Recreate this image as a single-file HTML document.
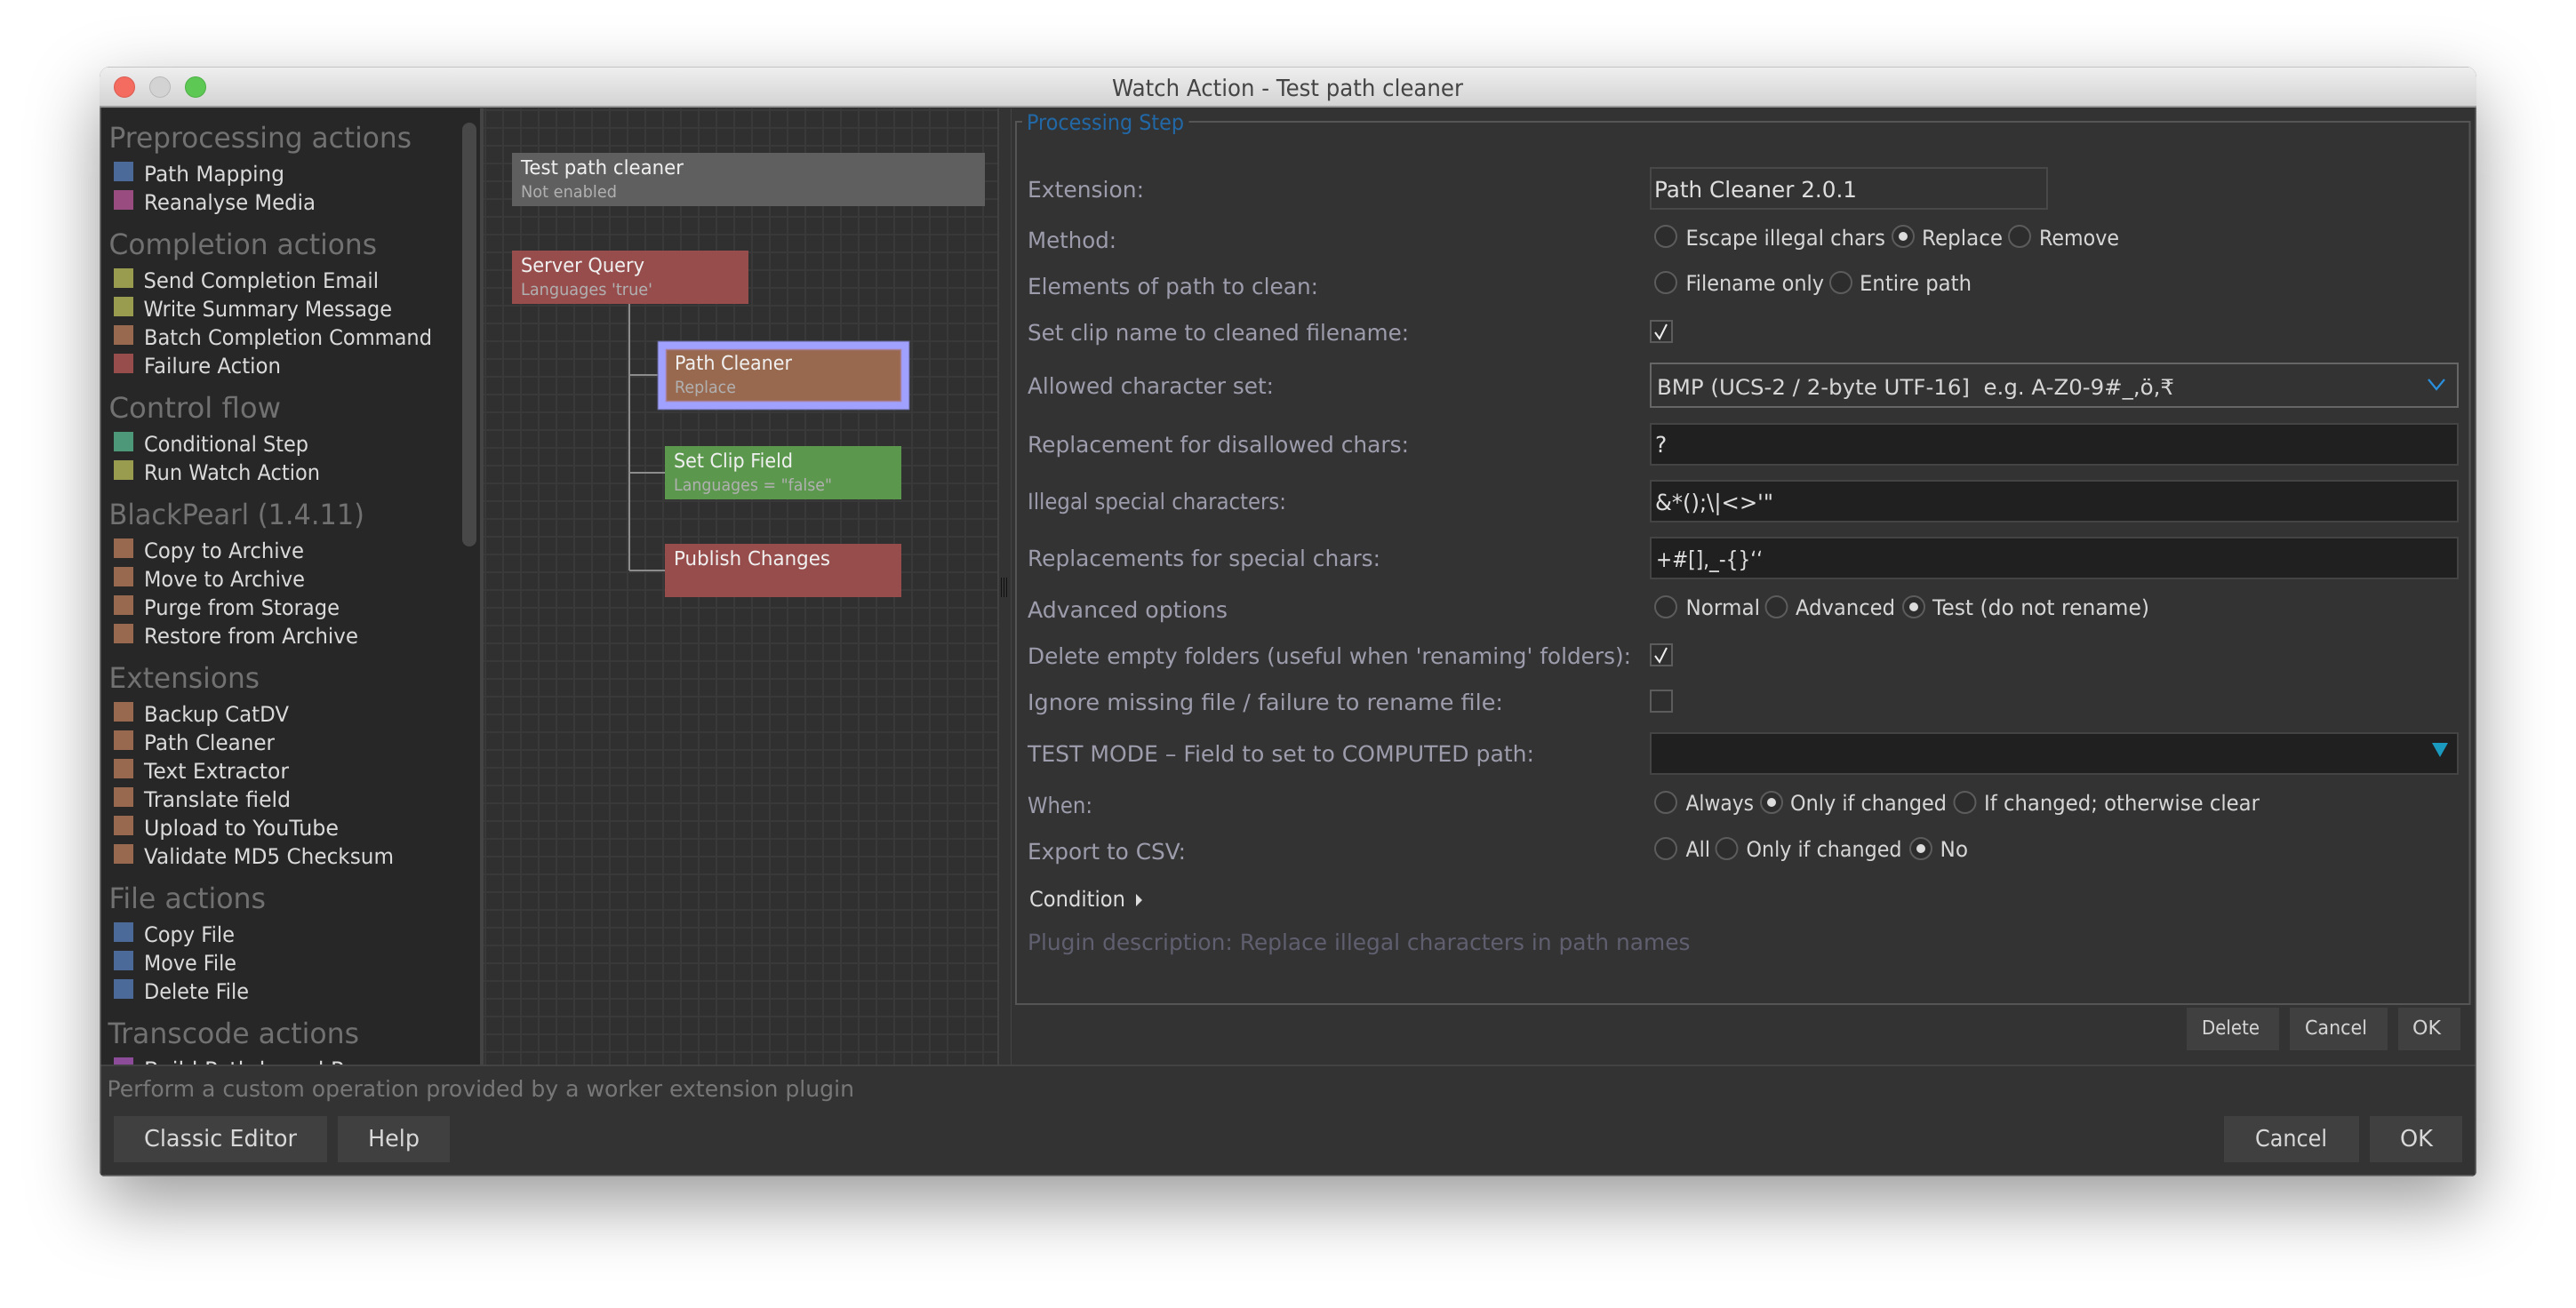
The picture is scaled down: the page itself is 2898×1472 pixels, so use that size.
<!DOCTYPE html>
<html><head><meta charset="utf-8"><title>Watch Action - Test path cleaner</title>
<style>
html,body{margin:0;padding:0;width:2898px;height:1472px;overflow:hidden;background:#fff}
#win{position:absolute;left:112px;top:75px;width:2674px;height:1249px;border-radius:12px 12px 6px 6px;background:#333;box-shadow:0 30px 80px rgba(0,0,0,.4)}
svg{position:absolute;left:0;top:0}
text{font-family:"DejaVu Sans","Liberation Sans",sans-serif;text-rendering:geometricPrecision}
.h{font-size:32px;fill:#717171}
.i{font-size:24px;fill:#dadada}
.b{font-size:22px;fill:#f0f0f0}
.s{font-size:18.5px;fill:#b0b0b0}
.l{font-size:25px;fill:#9c9cac}
.r{font-size:24px;fill:#d6d6d6}
.v{font-size:25px;fill:#dedede}
.big{font-size:26px;fill:#d8d8d8}
.sm{font-size:22px;fill:#d4d4d4}
.rad{fill:#2d2d2d;stroke:#5c5c5c;stroke-width:2}
.dot{fill:#dcdcdc}
.cb{fill:#2f2f2f;stroke:#5c5c5c;stroke-width:2}
.fd{fill:#202020;stroke:#444;stroke-width:2}
</style></head><body>
<div id="win"></div>
<svg width="2898" height="1472" viewBox="0 0 2898 1472" xmlns="http://www.w3.org/2000/svg">
<defs>
<linearGradient id="tb" x1="0" y1="0" x2="0" y2="1"><stop offset="0" stop-color="#efefef"/><stop offset="1" stop-color="#d3d3d3"/></linearGradient>
<clipPath id="side"><rect x="113" y="122" width="427" height="1076"/></clipPath>
<clipPath id="wclip"><path d="M124 75H2774a12 12 0 0 1 12 12V1318a6 6 0 0 1-6 6H118a6 6 0 0 1-6-6V87a12 12 0 0 1 12-12Z"/></clipPath>
<pattern id="grid" patternUnits="userSpaceOnUse" x="545" y="123" width="20" height="20"><rect width="20" height="20" fill="#303030"/><rect width="20" height="2" fill="#393939"/><rect width="2" height="20" fill="#393939"/></pattern>
</defs>

<g clip-path="url(#wclip)">
<!-- title bar -->
<rect x="112" y="75" width="2674" height="45" fill="url(#tb)"/>
<rect x="112" y="75" width="2674" height="1" fill="#c4c4c4"/>
<rect x="112" y="119" width="2674" height="2" fill="#9a9a9a"/>
<!-- body -->
<rect x="112" y="121" width="2674" height="1203" fill="#333"/>
<rect x="113" y="122" width="427" height="1076" fill="#272727"/>
<rect x="540" y="122" width="4" height="1076" fill="#444"/>
<rect x="544" y="122" width="579" height="1076" fill="url(#grid)"/>
<rect x="1122" y="122" width="2" height="1076" fill="#424242"/>
<rect x="1137" y="122" width="1" height="1076" fill="#444"/>
<rect x="112" y="1198" width="2674" height="2" fill="#434343"/>
<rect x="112" y="121" width="1.5" height="1203" fill="#777"/>
<rect x="2784.5" y="121" width="1.5" height="1203" fill="#6a6a6a"/>
<rect x="112" y="1322.5" width="2674" height="1.5" fill="#7a7a7a"/>
</g>

<!-- traffic lights -->
<circle cx="140" cy="98" r="11.5" fill="#f46b5f" stroke="#dc5a50"/>
<circle cx="180" cy="98" r="11.5" fill="#d3d3d3" stroke="#b9b9b9"/>
<circle cx="220" cy="98" r="11.5" fill="#5dc954" stroke="#4caf45"/>
<text x="1251" y="108" textLength="395" lengthAdjust="spacingAndGlyphs" font-size="26" fill="#454545">Watch Action - Test path cleaner</text>

<!-- sidebar -->
<rect x="520" y="138" width="16" height="477" rx="8" fill="#484848"/>
<g clip-path="url(#side)">
<text class="h" x="122.500" y="166" textLength="340.500" lengthAdjust="spacingAndGlyphs">Preprocessing actions</text>
<rect x="128" y="182" width="22" height="22" fill="#4c6a99"/><text class="i" x="162" y="204" textLength="158" lengthAdjust="spacingAndGlyphs">Path Mapping</text>
<rect x="128" y="214" width="22" height="22" fill="#994c7f"/><text class="i" x="162" y="236" textLength="193" lengthAdjust="spacingAndGlyphs">Reanalyse Media</text>

<text class="h" x="122.500" y="286" textLength="301.500" lengthAdjust="spacingAndGlyphs">Completion actions</text>
<rect x="128" y="302" width="22" height="22" fill="#999c4f"/><text class="i" x="161.500" y="324" textLength="264.500" lengthAdjust="spacingAndGlyphs">Send Completion Email</text>
<rect x="128" y="334" width="22" height="22" fill="#999c4f"/><text class="i" x="161.500" y="356" textLength="279.500" lengthAdjust="spacingAndGlyphs">Write Summary Message</text>
<rect x="128" y="366" width="22" height="22" fill="#99694f"/><text class="i" x="162" y="388" textLength="324" lengthAdjust="spacingAndGlyphs">Batch Completion Command</text>
<rect x="128" y="398" width="22" height="22" fill="#984d4d"/><text class="i" x="162" y="420" textLength="154" lengthAdjust="spacingAndGlyphs">Failure Action</text>

<text class="h" x="122.500" y="470" textLength="193.500" lengthAdjust="spacingAndGlyphs">Control flow</text>
<rect x="128" y="486" width="22" height="22" fill="#4d9878"/><text class="i" x="162" y="508" textLength="185" lengthAdjust="spacingAndGlyphs">Conditional Step</text>
<rect x="128" y="518" width="22" height="22" fill="#999c4f"/><text class="i" x="162" y="540" textLength="198" lengthAdjust="spacingAndGlyphs">Run Watch Action</text>

<text class="h" x="122.500" y="590" textLength="287.500" lengthAdjust="spacingAndGlyphs">BlackPearl (1.4.11)</text>
<rect x="128" y="606" width="22" height="22" fill="#99694f"/><text class="i" x="162" y="628" textLength="180" lengthAdjust="spacingAndGlyphs">Copy to Archive</text>
<rect x="128" y="638" width="22" height="22" fill="#99694f"/><text class="i" x="162" y="660" textLength="181" lengthAdjust="spacingAndGlyphs">Move to Archive</text>
<rect x="128" y="670" width="22" height="22" fill="#99694f"/><text class="i" x="162" y="692" textLength="220" lengthAdjust="spacingAndGlyphs">Purge from Storage</text>
<rect x="128" y="702" width="22" height="22" fill="#99694f"/><text class="i" x="162" y="724" textLength="241" lengthAdjust="spacingAndGlyphs">Restore from Archive</text>

<text class="h" x="122.500" y="774" textLength="169.500" lengthAdjust="spacingAndGlyphs">Extensions</text>
<rect x="128" y="790" width="22" height="22" fill="#99694f"/><text class="i" x="162" y="812" textLength="163" lengthAdjust="spacingAndGlyphs">Backup CatDV</text>
<rect x="128" y="822" width="22" height="22" fill="#99694f"/><text class="i" x="162" y="844" textLength="147" lengthAdjust="spacingAndGlyphs">Path Cleaner</text>
<rect x="128" y="854" width="22" height="22" fill="#99694f"/><text class="i" x="162" y="876" textLength="163" lengthAdjust="spacingAndGlyphs">Text Extractor</text>
<rect x="128" y="886" width="22" height="22" fill="#99694f"/><text class="i" x="162" y="908" textLength="165" lengthAdjust="spacingAndGlyphs">Translate field</text>
<rect x="128" y="918" width="22" height="22" fill="#99694f"/><text class="i" x="162" y="940" textLength="219" lengthAdjust="spacingAndGlyphs">Upload to YouTube</text>
<rect x="128" y="950" width="22" height="22" fill="#99694f"/><text class="i" x="162" y="972" textLength="281" lengthAdjust="spacingAndGlyphs">Validate MD5 Checksum</text>

<text class="h" x="122.500" y="1022" textLength="176.500" lengthAdjust="spacingAndGlyphs">File actions</text>
<rect x="128" y="1038" width="22" height="22" fill="#4c6a99"/><text class="i" x="162" y="1060" textLength="102" lengthAdjust="spacingAndGlyphs">Copy File</text>
<rect x="128" y="1070" width="22" height="22" fill="#4c6a99"/><text class="i" x="162" y="1092" textLength="104" lengthAdjust="spacingAndGlyphs">Move File</text>
<rect x="128" y="1102" width="22" height="22" fill="#4c6a99"/><text class="i" x="162" y="1124" textLength="118" lengthAdjust="spacingAndGlyphs">Delete File</text>

<text class="h" x="121.500" y="1174" textLength="282.500" lengthAdjust="spacingAndGlyphs">Transcode actions</text>
<rect x="128" y="1190" width="22" height="22" fill="#8c4c99"/><text class="i" x="162" y="1212" textLength="276" lengthAdjust="spacingAndGlyphs">Build Path-based Proxy</text>
</g>

<!-- canvas connectors -->
<path d="M708 342V642M708 422H741M708 532H748M708 642H748" fill="none" stroke="#8c8c8c" stroke-width="2"/>

<!-- nodes -->
<rect x="576" y="172" width="532" height="60" fill="#5f5f5f"/>
<text class="b" x="586" y="196" textLength="183" lengthAdjust="spacingAndGlyphs">Test path cleaner</text>
<text class="s" x="586" y="222" textLength="108" lengthAdjust="spacingAndGlyphs">Not enabled</text>

<rect x="576" y="282" width="266" height="60" fill="#984d4d"/>
<text class="b" x="586" y="306" textLength="139" lengthAdjust="spacingAndGlyphs">Server Query</text>
<text class="s" x="586" y="332" textLength="148" lengthAdjust="spacingAndGlyphs">Languages 'true'</text>

<rect x="740" y="384" width="283" height="77" fill="#a0a0ff" stroke="#5f5f8c" stroke-width="1"/>
<rect x="749.5" y="393.5" width="264" height="58" fill="#99694f" stroke="#a8809a" stroke-width="1.5"/>
<text class="b" x="759" y="416" textLength="132" lengthAdjust="spacingAndGlyphs">Path Cleaner</text>
<text class="s" x="759" y="442" textLength="69" lengthAdjust="spacingAndGlyphs">Replace</text>

<rect x="748" y="502" width="266" height="60" fill="#5b984d"/>
<text class="b" x="758" y="526" textLength="134" lengthAdjust="spacingAndGlyphs">Set Clip Field</text>
<text class="s" x="758" y="552" textLength="178" lengthAdjust="spacingAndGlyphs">Languages = "false"</text>

<rect x="748" y="612" width="266" height="60" fill="#984d4d"/>
<text class="b" x="758" y="636" textLength="176" lengthAdjust="spacingAndGlyphs">Publish Changes</text>

<!-- splitter grip -->
<rect x="1126" y="650" width="7" height="22" fill="#111"/>
<path d="M1128 650v22M1131 650v22" stroke="#555" stroke-width="1"/>

<!-- group box -->
<path d="M1150 137H1143V1130H2778.5V137H1337.5" fill="none" stroke="#555" stroke-width="2"/>
<text x="1155" y="146" textLength="177" lengthAdjust="spacingAndGlyphs" font-size="24" fill="#2268a6">Processing Step</text>

<!-- labels -->
<text class="l" x="1156" y="222" textLength="131" lengthAdjust="spacingAndGlyphs">Extension:</text>
<text class="l" x="1156" y="279" textLength="100" lengthAdjust="spacingAndGlyphs">Method:</text>
<text class="l" x="1156" y="331" textLength="327" lengthAdjust="spacingAndGlyphs">Elements of path to clean:</text>
<text class="l" x="1156" y="383" textLength="429" lengthAdjust="spacingAndGlyphs">Set clip name to cleaned filename:</text>
<text class="l" x="1156" y="443" textLength="277" lengthAdjust="spacingAndGlyphs">Allowed character set:</text>
<text class="l" x="1156" y="509" textLength="429" lengthAdjust="spacingAndGlyphs">Replacement for disallowed chars:</text>
<text class="l" x="1156" y="573" textLength="291" lengthAdjust="spacingAndGlyphs">Illegal special characters:</text>
<text class="l" x="1156" y="637" textLength="397" lengthAdjust="spacingAndGlyphs">Replacements for special chars:</text>
<text class="l" x="1156" y="695" textLength="225" lengthAdjust="spacingAndGlyphs">Advanced options</text>
<text class="l" x="1156" y="747" textLength="679" lengthAdjust="spacingAndGlyphs">Delete empty folders (useful when 'renaming' folders):</text>
<text class="l" x="1156" y="799" textLength="535" lengthAdjust="spacingAndGlyphs">Ignore missing file / failure to rename file:</text>
<text class="l" x="1156" y="857" textLength="570" lengthAdjust="spacingAndGlyphs">TEST MODE – Field to set to COMPUTED path:</text>
<text class="l" x="1156" y="915" textLength="73" lengthAdjust="spacingAndGlyphs">When:</text>
<text class="l" x="1156" y="967" textLength="178" lengthAdjust="spacingAndGlyphs">Export to CSV:</text>

<!-- controls -->
<rect x="1857" y="189" width="446" height="46" fill="#333" stroke="#484848" stroke-width="2"/>
<text class="v" x="1861" y="222" textLength="228" lengthAdjust="spacingAndGlyphs">Path Cleaner 2.0.1</text>

<circle class="rad" cx="1874" cy="266" r="12"/><text class="r" x="1896.500" y="276" textLength="224.500" lengthAdjust="spacingAndGlyphs">Escape illegal chars</text>
<circle class="rad" cx="2141" cy="266" r="12"/><circle class="dot" cx="2141" cy="266" r="5"/><text class="r" x="2162" y="276" textLength="91" lengthAdjust="spacingAndGlyphs">Replace</text>
<circle class="rad" cx="2272" cy="266" r="12"/><text class="r" x="2294" y="276" textLength="90" lengthAdjust="spacingAndGlyphs">Remove</text>

<circle class="rad" cx="1874" cy="318" r="12"/><text class="r" x="1896.500" y="327" textLength="155.500" lengthAdjust="spacingAndGlyphs">Filename only</text>
<circle class="rad" cx="2071" cy="318" r="12"/><text class="r" x="2092" y="327" textLength="126" lengthAdjust="spacingAndGlyphs">Entire path</text>

<rect class="cb" x="1857" y="361" width="24" height="24"/>
<path d="M1862 374L1867 381L1875 365" fill="none" stroke="#eee" stroke-width="2"/>

<rect x="1857" y="409" width="908" height="49" fill="#333" stroke="#666" stroke-width="2"/>
<text class="r" x="1864" y="444" textLength="582" lengthAdjust="spacingAndGlyphs">BMP (UCS-2 / 2-byte UTF-16]&#160;&#160;e.g. A-Z0-9#_,ö,₹</text>
<path d="M2732 427L2741 438L2750 427" fill="none" stroke="#2a8fdc" stroke-width="2.2"/>

<rect class="fd" x="1857" y="477" width="908" height="46"/>
<text class="v" x="1862" y="509">?</text>
<rect class="fd" x="1857" y="541" width="908" height="46"/>
<text class="v" x="1862" y="574" textLength="133" lengthAdjust="spacingAndGlyphs">&amp;*();\|&lt;&gt;'"</text>
<rect class="fd" x="1857" y="605" width="908" height="46"/>
<text class="v" x="1863" y="638" textLength="120" lengthAdjust="spacingAndGlyphs">+#[],_-{}‘‘</text>

<circle class="rad" cx="1874" cy="683" r="12"/><text class="r" x="1896.500" y="692" textLength="83.500" lengthAdjust="spacingAndGlyphs">Normal</text>
<circle class="rad" cx="1998.500" cy="683" r="12"/><text class="r" x="2020" y="692" textLength="112" lengthAdjust="spacingAndGlyphs">Advanced</text>
<circle class="rad" cx="2153" cy="683" r="12"/><circle class="dot" cx="2153" cy="683" r="5"/><text class="r" x="2174" y="692" textLength="244" lengthAdjust="spacingAndGlyphs">Test (do not rename)</text>

<rect class="cb" x="1857" y="725" width="24" height="24"/>
<path d="M1862 738L1867 745L1875 729" fill="none" stroke="#eee" stroke-width="2"/>
<rect class="cb" x="1857" y="777" width="24" height="24"/>

<rect class="fd" x="1857" y="825" width="908" height="46"/>
<path d="M2736 836H2754L2745 852Z" fill="#1b9abf"/>

<circle class="rad" cx="1874" cy="903" r="12"/><text class="r" x="1896.500" y="912" textLength="76.500" lengthAdjust="spacingAndGlyphs">Always</text>
<circle class="rad" cx="1993" cy="903" r="12"/><circle class="dot" cx="1993" cy="903" r="5"/><text class="r" x="2014" y="912" textLength="176" lengthAdjust="spacingAndGlyphs">Only if changed</text>
<circle class="rad" cx="2210.500" cy="903" r="12"/><text class="r" x="2232" y="912" textLength="310" lengthAdjust="spacingAndGlyphs">If changed; otherwise clear</text>

<circle class="rad" cx="1874" cy="955" r="12"/><text class="r" x="1896.500" y="964" textLength="27.500" lengthAdjust="spacingAndGlyphs">All</text>
<circle class="rad" cx="1942.500" cy="955" r="12"/><text class="r" x="1964.500" y="964" textLength="175" lengthAdjust="spacingAndGlyphs">Only if changed</text>
<circle class="rad" cx="2161" cy="955" r="12"/><circle class="dot" cx="2161" cy="955" r="5"/><text class="r" x="2182.500" y="964" textLength="31.500" lengthAdjust="spacingAndGlyphs">No</text>

<text class="r" x="1158" y="1020" textLength="108" lengthAdjust="spacingAndGlyphs" style="fill:#dcdcdc">Condition</text>
<path d="M1278 1006L1285 1013L1278 1020Z" fill="#dcdcdc"/>
<text x="1156" y="1069" textLength="745.500" lengthAdjust="spacingAndGlyphs" font-size="25" fill="#5f5f70">Plugin description: Replace illegal characters in path names</text>

<!-- small buttons -->
<rect x="2460" y="1134" width="104" height="48" fill="#404040"/>
<text class="sm" x="2477" y="1164" textLength="65" lengthAdjust="spacingAndGlyphs">Delete</text>
<rect x="2576" y="1134" width="110" height="48" fill="#404040"/>
<text class="sm" x="2593" y="1164" textLength="70" lengthAdjust="spacingAndGlyphs">Cancel</text>
<rect x="2698" y="1134" width="70" height="48" fill="#404040"/>
<text class="sm" x="2714" y="1164" textLength="32" lengthAdjust="spacingAndGlyphs">OK</text>

<!-- footer -->
<text x="120.500" y="1234" textLength="840.500" lengthAdjust="spacingAndGlyphs" font-size="25" fill="#777">Perform a custom operation provided by a worker extension plugin</text>
<rect x="128" y="1256" width="240" height="52" fill="#404040"/>
<text class="big" x="162" y="1290" textLength="172" lengthAdjust="spacingAndGlyphs">Classic Editor</text>
<rect x="380" y="1256" width="126" height="52" fill="#404040"/>
<text class="big" x="414" y="1290" textLength="58" lengthAdjust="spacingAndGlyphs">Help</text>
<rect x="2502" y="1256" width="152" height="52" fill="#404040"/>
<text class="big" x="2537" y="1290" textLength="81" lengthAdjust="spacingAndGlyphs">Cancel</text>
<rect x="2666" y="1256" width="104" height="52" fill="#404040"/>
<text class="big" x="2700" y="1290" textLength="37" lengthAdjust="spacingAndGlyphs">OK</text>
</svg>
</body></html>
